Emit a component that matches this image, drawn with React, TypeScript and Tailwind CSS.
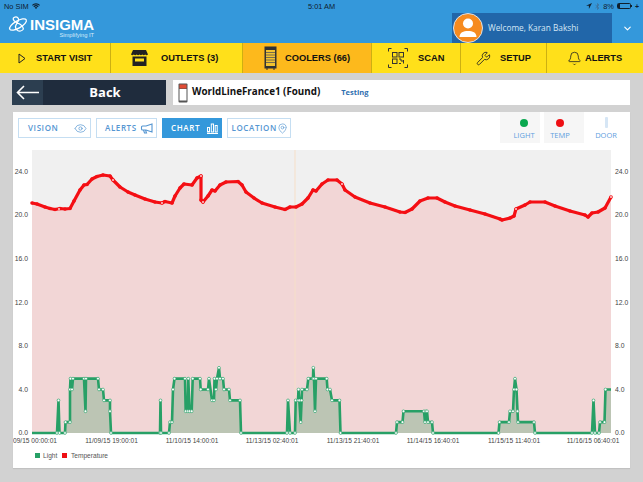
import { Bell, ChevronDown, Eye, MapPin, Wrench } from "lucide-react";

const lightData: [number, number][] = [
  [32, 0], [57, 0], [58.5, 3], [59.5, 0], [65, 0], [65.5, 1], [70, 1], [70, 4], [70.5, 5], [72, 4], [73, 5], [84, 5], [85.5, 2], [86, 5], [98, 5], [99, 4], [103, 4], [104, 3], [110, 3], [110, 2], [111, 0],
  [160, 0], [160.5, 3], [161, 0], [169, 0], [170, 1], [172, 1], [173, 4], [174.5, 5], [185, 5], [185.7, 2], [187.7, 2], [188.3, 5], [189.5, 2], [191.7, 2], [192.7, 5], [200, 5], [200.7, 4], [208, 4], [209, 5], [212, 3], [214, 3], [214.5, 5], [216, 4], [217, 5], [219, 6], [220, 5], [223, 5], [224, 4], [229, 4], [230, 3], [240, 3], [241, 0],
  [287, 0], [288, 3], [290, 0], [295, 0], [295.7, 3], [298, 3], [298.5, 4], [299.3, 3], [300.7, 1], [301.6, 3], [302, 4], [307, 4], [308.3, 5], [313, 5], [313.3, 6], [314, 5], [315, 2], [316, 5], [326.7, 5], [327.5, 4], [330, 4], [332, 3], [339.5, 3], [340.5, 0],
  [396, 0], [397, 1], [402.5, 1], [403.5, 2], [424, 2], [425, 1], [426, 2], [427, 2], [428, 1], [432, 1], [433, 0],
  [498.5, 0], [499.5, 1], [509, 1], [510, 2], [513, 2], [514, 4], [515, 5], [516.5, 4], [517.5, 2], [518, 1], [534, 1], [535, 0],
  [592, 0], [593.5, 3], [595, 0], [599, 0], [600, 1], [604.5, 1], [605.5, 4], [611, 4],
];

const tempData: [number, number][] = [
  [32, 203], [37, 204], [45, 207], [50, 208.5], [55, 209.5], [60, 208.5], [65, 209], [70, 208.5], [74, 201], [80, 190], [84, 185], [87, 184.5], [92, 179], [97, 176.5], [103, 175], [110, 176], [113, 180], [120, 187], [128, 192], [135, 195], [145, 199], [155, 202], [162, 203], [165, 201.5], [172, 203], [175, 196], [180, 188], [184, 184], [192, 185], [197, 178], [201, 176], [201, 200], [203, 202], [208, 196], [212, 190], [215, 191], [220, 185], [226, 182], [238, 181.5], [242, 185], [246, 192], [254, 198], [262, 203], [275, 207], [285, 209.5], [290, 207], [296, 207], [302, 204], [308, 198], [313, 190], [316, 191], [322, 184], [328, 180], [337, 180], [342, 184], [345, 190], [355, 197], [370, 203], [385, 207], [400, 212], [405, 212.5], [412, 209], [420, 201], [428, 198], [437, 198], [445, 202], [455, 206], [470, 210], [485, 214], [500, 219], [502, 220], [510, 218], [514, 216], [516, 209], [525, 205], [530, 202], [545, 202], [555, 206], [570, 211], [585, 215], [588, 217], [592, 213], [598, 212], [605, 208], [611, 197],
];

const yOf = (v: number) => 433 - v * 10.875;
const lightPts = lightData.map(([x, v]) => `${x},${yOf(v)}`).join(" ");
const tempPts = tempData.map(([x, y]) => `${x},${y}`).join(" ");
const yLabels = [["24.0", 171.5], ["20.0", 215], ["16.0", 259], ["12.0", 302.5], ["8.0", 346], ["4.0", 389.5], ["0.0", 433]] as const;
const xLabels = [
  ["11/09/15 19:00:01", 111.5], ["11/10/15 14:00:01", 192], ["11/13/15 02:40:01", 272],
  ["11/13/15 21:40:01", 353], ["11/14/15 16:40:01", 433], ["11/15/15 11:40:01", 514], ["11/16/15 06:40:01", 593],
] as const;

function Logo() {
  return (
    <svg width="20" height="17" viewBox="0 0 20 17" fill="none" stroke="white" strokeWidth="1.3">
      <ellipse cx="10" cy="8.5" rx="9.5" ry="3.6" transform="rotate(-30 10 8.5)" />
      <path d="M6 1.5c3-1.5 5 .5 4.5 3L8 9c-1 2-.5 4 1.5 5.5 2 1 4.5.5 5.5-1 1-2-.5-3.500-2.500-5L7 5.500C5.500 4.500 4.500 2.500 6 1.500Z" />
    </svg>
  );
}

function NavCell({ children, label, className }: { children: React.ReactNode; label: string; className: string }) {
  return (
    <div className={`flex h-full shrink-0 items-center border-r border-[#cdb012] font-['Liberation_Sans',sans-serif] text-[9.3px] font-bold text-[#111] ${className}`}>
      {children}
      <span className="mt-[2px] whitespace-nowrap">{label}</span>
    </div>
  );
}

function Tab({ label, width, pad, active, children }: { label: string; width: string; pad: string; active?: boolean; children: React.ReactNode }) {
  return (
    <div className={`flex h-[20px] items-center justify-between border-[1.5px] pr-[3px] font-['Open_Sans',sans-serif] text-[8px] font-semibold tracking-[0.6px] ${width} ${pad} ${active ? "border-[#3498db] bg-[#3498db] text-white" : "border-[#c5def2] bg-white text-[#5596d2]"}`}>
      <span>{label}</span>
      {children}
    </div>
  );
}

function Indicator({ label, width, bg, shift, children }: { label: string; width: string; bg: string; shift: string; children: React.ReactNode }) {
  return (
    <div className={`flex h-[31px] flex-col items-center pt-[5px] font-['Open_Sans',sans-serif] text-[7.5px] text-[#5fa0de] ${width} ${bg} ${shift}`}>
      <div className="flex h-[11px] items-center">{children}</div>
      <span className="mt-[2px] leading-[10px]">{label}</span>
    </div>
  );
}

export default function App() {
  return (
    <div className="h-[482px] w-[643px] overflow-hidden bg-[#d2d2d2]">
      <header className="h-[43px] bg-[#3498db]">
        <div className="relative flex h-[13px] items-center justify-between pl-[4px] pr-[4px] font-['Liberation_Sans',sans-serif] text-[7.4px] text-[#10202e]">
          <div className="flex items-center gap-[3px]">
            <span>No SIM</span>
            <svg width="8" height="6" viewBox="0 0 8 6" fill="#10202e"><path d="M0 2a5.500 5.500 0 0 1 8 0L7.200 2.800a4.500 4.500 0 0 0-6.400 0Z" /><path d="M1.400 3.400a3.600 3.600 0 0 1 5.200 0L5.800 4.200a2.400 2.400 0 0 0-3.600 0Z" /><path d="M2.800 4.700a1.700 1.700 0 0 1 2.400 0L4 6Z" /></svg>
          </div>
          <span className="absolute left-[308px] font-medium">5:01 AM</span>
          <div className="flex items-center gap-[3px]">
            <svg width="6" height="6" viewBox="0 0 6 6" fill="#10202e"><path d="M6 0 0 2.800h2.900V6Z" /></svg>
            <svg width="5" height="7" viewBox="0 0 5 7" fill="none" stroke="#3f6f96" strokeWidth="0.7"><path d="M.5 2 4 5 2.500 6.500V.5L4 2 .5 5" /></svg>
            <span>8%</span>
            <div className="flex items-center">
              <div className="h-[6px] w-[14px] rounded-[1.5px] border-[0.7px] border-[#10202e]"><div className="h-full w-[2px] bg-[#10202e]" /></div>
              <div className="h-[2px] w-[1px] bg-[#10202e]" />
            </div>
            <span className="text-[7px] font-bold leading-none">+</span>
          </div>
        </div>
        <div className="flex h-[30px] items-stretch justify-between">
          <div className="flex flex-col pl-[8px] pt-[3px]">
            <div className="flex items-center gap-[2px]">
              <Logo />
              <span className="font-['Liberation_Sans',sans-serif] text-[15px] font-bold leading-[17px] text-white">INSIGMA</span>
            </div>
            <span className="-mt-[1px] self-end font-['Liberation_Sans',sans-serif] text-[5.8px] leading-[7px] text-[#d7ebfa]">Simplifying IT</span>
          </div>
          <div className="flex">
            <div className="flex w-[160px] items-center gap-[5px] bg-[#2166a9] pl-[1px]">
              <div className="flex h-[30px] w-[30px] items-end justify-center overflow-hidden rounded-full border-[1.5px] border-[#d9e4ee] bg-[#f68b1f]">
                <svg width="20" height="21" viewBox="0 0 20 21" fill="white" className="mb-[4px]"><circle cx="10" cy="6.500" r="5" /><path d="M1.500 20c0-4.500 4-6 8.500-6s8.500 1.500 8.500 6Z" /></svg>
              </div>
              <span className="whitespace-nowrap font-['Open_Sans',sans-serif] text-[8.3px] text-[#d5e6f5]">Welcome, Karan Bakshi</span>
            </div>
            <div className="flex w-[31px] items-center justify-center">
              <ChevronDown size={11} strokeWidth={2.5} className="text-white" />
            </div>
          </div>
        </div>
      </header>

      <nav className="flex h-[30px] bg-[#ffe01a]">
        <NavCell label="START VISIT" className="w-[111px] gap-[10px] pl-[18px]">
          <svg width="8" height="11" viewBox="0 0 8 11" fill="none" stroke="#222" strokeWidth="1"><path d="M1 1v9l6-4.500Z" /></svg>
        </NavCell>
        <NavCell label="OUTLETS (3)" className="w-[132px] gap-[13px] pl-[20px]">
          <svg width="17" height="16" viewBox="0 0 17 16" fill="#222"><path d="M2 0h13l2 4.500q-1.400 1.500-2.800 0-1.400 1.500-2.900 0-1.400 1.500-2.800 0-1.400 1.500-2.800 0-1.400 1.500-2.900 0-1.400 1.500-2.800 0Z" /><path d="M1.500 6.500h14V16h-14Zm2.500 2v3h9v-3Z" /></svg>
        </NavCell>
        <NavCell label="COOLERS (66)" className="w-[129px] gap-[8px] bg-[#fdb91c] pl-[21px]">
          <svg width="13" height="24" viewBox="0 0 13 24"><rect x=".5" y=".5" width="12" height="22" fill="#333" /><rect x="2" y="4" width="9" height="16" fill="#f3c330" /><path d="M2 6.500h9M2 9h9M2 11.500h9M2 14h9M2 16.500h9" stroke="#555" strokeWidth=".8" /><path d="M2 23h2M9 23h2" stroke="#333" /></svg>
        </NavCell>
        <NavCell label="SCAN" className="w-[89px] gap-[10px] pl-[16px]">
          <svg width="20" height="20" viewBox="0 0 20 20" fill="none" stroke="#333"><path d="M.5 3.500v-3h3M16.500.5h3v3M.5 16.500v3h3M19.500 16.500v3h-3" /><rect x="4.500" y="4.500" width="4.500" height="4.500" /><rect x="11" y="4.500" width="4.500" height="4.500" /><rect x="4.500" y="11" width="4.500" height="4.500" /><path d="M11 11h2v2h2.500M11 15.500h2M15.500 12v3.500" /></svg>
        </NavCell>
        <NavCell label="SETUP" className="w-[86px] gap-[9px] pl-[15px]">
          <Wrench size={15} strokeWidth={1.4} className="text-[#222]" />
        </NavCell>
        <NavCell label="ALERTS" className="grow gap-[3px] border-r-0 pl-[20px]">
          <Bell size={15} strokeWidth={1.3} className="text-[#222]" />
        </NavCell>
      </nav>

      <div className="mt-[7px] flex gap-[7px] pl-[12px]">
        <div className="flex h-[25px] w-[154px] bg-[#1f2c3d]">
          <div className="flex w-[31px] items-center justify-center bg-[#2c3e50]">
            <svg width="23" height="15" viewBox="0 0 23 15" fill="none" stroke="white" strokeWidth="1.600"><path d="M23 7.500H1.500M8 1 1.500 7.500 8 14" /></svg>
          </div>
          <div className="flex grow items-center justify-center pl-[1px] font-['Open_Sans',sans-serif] text-[13px] font-bold text-white">Back</div>
        </div>
        <div className="flex h-[25px] w-[457px] items-center bg-white pl-[5px]">
          <svg width="10" height="20" viewBox="0 0 10 20"><rect x=".5" y=".5" width="9" height="19" rx="1" fill="#555" /><rect x="1.500" y="1.500" width="7" height="4" fill="#e04b35" /><rect x="1.500" y="6" width="7" height="11.500" fill="#fff" /></svg>
          <span className="ml-[4px] whitespace-nowrap font-['Open_Sans',sans-serif] text-[9.8px] font-bold text-[#111]">WorldLineFrance1 (Found)</span>
          <span className="ml-[21px] font-['Open_Sans',sans-serif] text-[7.5px] font-bold text-[#2f6fb0]">Testing</span>
        </div>
      </div>

      <main className="ml-[13px] mt-[7px] h-[356px] w-[617px] bg-white shadow-[0_1px_1px_rgba(0,0,0,0.08)]">
        <div className="flex h-[31px] justify-between pr-[2px]">
          <div className="flex gap-[5px] pl-[5px] pt-[6px]">
            <Tab label="VISION" width="w-[73px]" pad="pl-[9px]"><Eye size={13} strokeWidth={1.3} className="text-[#5596d2]" /></Tab>
            <Tab label="ALERTS" width="w-[61px]" pad="pl-[8px]">
              <svg width="13" height="11" viewBox="0 0 13 11" fill="none" stroke="#5596d2" strokeWidth="1.100"><path d="M12 1v8L6 7H2.500A1 1 0 0 1 1.500 6V4a1 1 0 0 1 1-1H6ZM3.500 7l1 3h2l-1-3" /></svg>
            </Tab>
            <Tab label="CHART" width="w-[60px]" pad="pl-[8px]" active>
              <svg width="11" height="11" viewBox="0 0 11 11" fill="none" stroke="white" strokeWidth="1"><rect x=".5" y="4.500" width="2" height="4.500" /><rect x="4.300" y="1" width="2.200" height="8" /><rect x="8.200" y="2.500" width="2" height="6.500" /><path d="M0 10.500h11" /></svg>
            </Tab>
            <Tab label="LOCATION" width="w-[64px]" pad="pl-[3.5px]"><MapPin size={11} strokeWidth={1.4} className="shrink-0 text-[#5596d2]" /></Tab>
          </div>
          <div className="flex">
            <Indicator label="LIGHT" width="w-[40px]" bg="bg-[#f6f6f6]" shift="pl-[8px]"><div className="h-[8px] w-[8px] rounded-full bg-[#0aa84f]" /></Indicator>
            <div className="w-[4px]" />
            <Indicator label="TEMP" width="w-[40px]" bg="bg-[#f6f6f6]" shift="pr-[8px]"><div className="h-[8px] w-[8px] rounded-full bg-[#ee0f14]" /></Indicator>
            <Indicator label="DOOR" width="w-[44px]" bg="bg-white" shift="pl-0"><div className="h-[11px] w-[3px] rounded-[1px] bg-[#d6e6f5]" /></Indicator>
          </div>
        </div>

        <svg width="617" height="325" viewBox="13 143 617 325" className="block font-['Liberation_Sans',sans-serif]">
          <rect x="32" y="150" width="579" height="283" fill="#f0f0f0" />
          <polygon points={`32,433 ${tempPts} 611,433`} fill="#f2d6d6" />
          <line x1="295" y1="150" x2="295" y2="433" stroke="#f6dfc8" strokeWidth="1" />
          <polygon points={`32,433 ${lightPts} 611,433`} fill="#6bac83" fillOpacity="0.4" />
          <polyline points={lightPts} fill="none" stroke="#27a066" strokeWidth="2.600" strokeLinejoin="round" />
          {lightData.slice(1, -1).filter(([, v], i, a) => v !== 0 || a[i - 1]?.[1] !== 0 || a[i + 1]?.[1] !== 0).map(([x, v], i) => (
            <circle key={i} cx={x} cy={yOf(v)} r="1.400" fill="#fff" stroke="#27a066" strokeWidth="0.600" />
          ))}
          <polyline points={tempPts} fill="none" stroke="#f40f14" strokeWidth="3.200" strokeLinejoin="round" />
          {tempData.map(([x, y], i) => (
            <circle key={i} cx={x} cy={y} r="1.800" fill="#f40f14" />
          ))}
          {[[113, 180], [201, 176], [203, 202], [162, 203], [59, 209], [342, 184], [516, 209], [611, 197]].map(([x, y], i) => (
            <circle key={i} cx={x} cy={y} r="1" fill="#fbd0d0" />
          ))}
          {yLabels.map(([t, y]) => (
            <g key={t} fontSize="6.800" fill="#444">
              <text x="28" y={y + 2.300} textAnchor="end">{t}</text>
              <text x="615" y={y + 2.300}>{t}</text>
            </g>
          ))}
          <text x="13" y="443" fontSize="6.600" fill="#444">09/15 00:00:01</text>
          {xLabels.map(([t, x]) => (
            <text key={x} x={x} y="443" fontSize="6.600" fill="#444" textAnchor="middle">{t}</text>
          ))}
          <rect x="35" y="453" width="5" height="5" fill="#27a066" />
          <text x="43" y="457.500" fontSize="6.600" fill="#555">Light</text>
          <rect x="62" y="453" width="5" height="5" fill="#ee0f14" />
          <text x="71" y="457.500" fontSize="6.600" fill="#555">Temperature</text>
        </svg>
      </main>
    </div>
  );
}
